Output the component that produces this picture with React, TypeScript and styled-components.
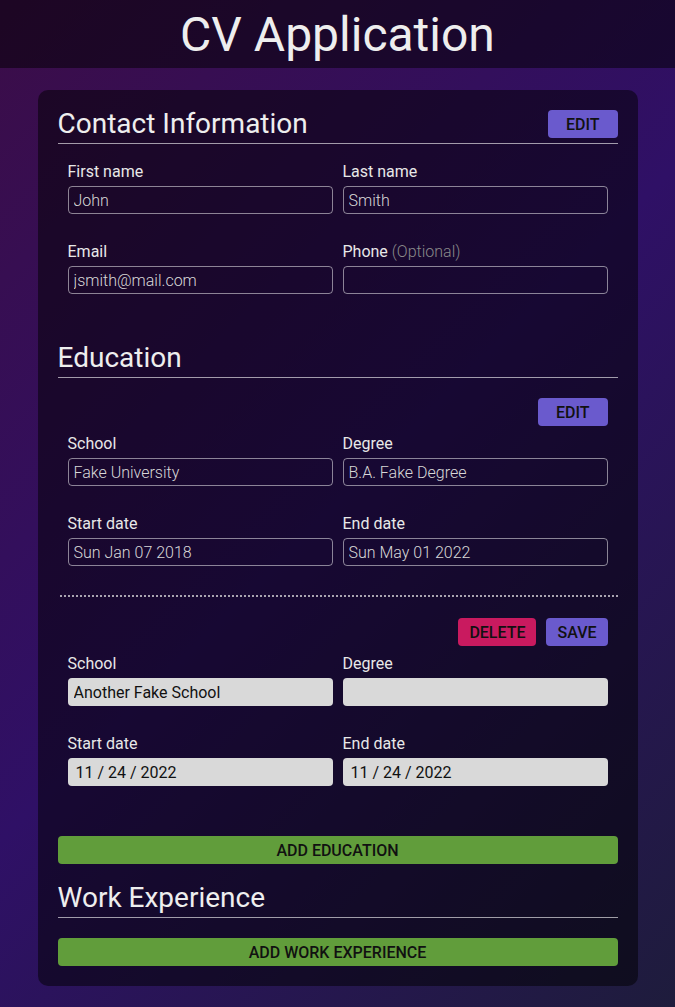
import React from "react";
import styled, { createGlobalStyle, css } from "styled-components";

const GlobalStyle = createGlobalStyle`
  html, body {
    margin: 0;
    padding: 0;
  }
  body {
    font-family: Roboto, "Liberation Sans", Arial, sans-serif;
    color: #eeeeee;
    background: #2a0f55;
  }
  * { box-sizing: border-box; }
`;

const Page = styled.div`
  min-height: 100vh;
  background: linear-gradient(135deg, #3b0d48 0%, #2f1066 50%, #1e1c3c 100%);
  padding-bottom: 21px;
`;

const Header = styled.header`
  background: rgba(0, 0, 0, 0.5);
  padding: 7px 0 5px;
  text-align: center;
`;

const Title = styled.h1`
  margin: 0;
  font-size: 48px;
  line-height: 56px;
  font-weight: 400;
  color: #eeeeee;
`;

const Card = styled.main`
  width: 600px;
  margin: 22px auto 0;
  background: rgba(0, 0, 0, 0.5);
  border-radius: 10px;
  padding: 20px;
  display: flex;
  flex-direction: column;
  gap: 20px;
`;

const Section = styled.section`
  display: flex;
  flex-direction: column;
`;

const SectionHeader = styled.div`
  display: flex;
  justify-content: space-between;
  align-items: flex-start;
  border-bottom: 1px solid rgba(255, 255, 255, 0.6);
`;

const SectionTitle = styled.h2`
  margin: 0;
  padding-bottom: 6px;
  font-size: 28px;
  line-height: 27px;
  font-weight: 400;
  color: #eeeeee;
`;

type Variant = "primary" | "danger" | "success";

const variantColors: Record<Variant, string> = {
  primary: "#6a5acd",
  danger: "#c91a5f",
  success: "#619d3b",
};

const Button = styled.button<{ $variant: Variant; $wide?: boolean; $block?: boolean }>`
  font-family: Roboto, "Liberation Sans", Arial, sans-serif;
  font-size: 16px;
  font-weight: 500;
  text-transform: uppercase;
  color: #111111;
  height: 28px;
  border: none;
  border-radius: 4px;
  background: ${(p) => variantColors[p.$variant]};
  padding: 0 ${(p) => (p.$wide ? "18px" : "11px")};
  cursor: pointer;
  ${(p) =>
    p.$block &&
    css`
      width: 100%;
      padding: 0;
    `}
`;

const Form = styled.form<{ $top: number; $bottom: number }>`
  padding: ${(p) => p.$top}px 10px ${(p) => p.$bottom}px;
  display: flex;
  flex-direction: column;
  gap: 8px;
`;

const ActionRow = styled.div`
  display: flex;
  justify-content: flex-end;
  gap: 10px;
`;

const FieldGrid = styled.div`
  display: grid;
  grid-template-columns: 1fr 1fr;
  gap: 28px 10px;
`;

const Field = styled.label`
  display: flex;
  flex-direction: column;
  gap: 5px;
`;

const LabelText = styled.span`
  font-size: 16px;
  line-height: 19px;
  font-weight: 400;
  color: #e8e8e8;
`;

const Optional = styled.span`
  font-weight: 300;
  color: #8a8a8a;
`;

const Input = styled.input<{ $filled?: boolean; $date?: boolean }>`
  font-family: Roboto, "Liberation Sans", Arial, sans-serif;
  font-size: 16px;
  height: 28px;
  width: 100%;
  border-radius: 4px;
  outline: none;
  ${(p) =>
    p.$filled
      ? css`
          background: #d9d9d9;
          border: none;
          color: #111111;
          font-weight: 400;
          padding: 0 ${p.$date ? "8px" : "6px"};
        `
      : css`
          background: transparent;
          border: 1px solid rgba(255, 255, 255, 0.5);
          color: #d8d8d8;
          font-weight: 300;
          padding: 0 5px;
        `}
`;

const Separator = styled.div`
  height: 2px;
  margin-left: 2px;
  background-image: repeating-linear-gradient(
    90deg,
    #a9a4b0 0 2px,
    transparent 2px 4px
  );
`;

const AddRow = styled.div<{ $top: number }>`
  margin-top: ${(p) => p.$top}px;
  display: flex;
`;

type FieldDef = {
  label: string;
  value: string;
  optional?: boolean;
  date?: boolean;
};

function Fields({ fields, filled }: { fields: FieldDef[]; filled?: boolean }) {
  return (
    <FieldGrid>
      {fields.map((f) => (
        <Field key={f.label}>
          <LabelText>
            {f.label}
            {f.optional && <Optional> (Optional)</Optional>}
          </LabelText>
          <Input
            type="text"
            readOnly={!filled}
            defaultValue={f.value}
            $filled={filled}
            $date={f.date}
          />
        </Field>
      ))}
    </FieldGrid>
  );
}

export default function App() {
  return (
    <>
      <GlobalStyle />
      <Page>
        <Header>
          <Title>CV Application</Title>
        </Header>
        <Card>
          <Section>
            <SectionHeader>
              <SectionTitle>Contact Information</SectionTitle>
              <Button $variant="primary" $wide type="button">
                Edit
              </Button>
            </SectionHeader>
            <Form $top={18} $bottom={30}>
              <Fields
                fields={[
                  { label: "First name", value: "John" },
                  { label: "Last name", value: "Smith" },
                  { label: "Email", value: "jsmith@mail.com" },
                  { label: "Phone", value: "", optional: true },
                ]}
              />
            </Form>
          </Section>

          <Section>
            <SectionHeader>
              <SectionTitle>Education</SectionTitle>
            </SectionHeader>
            <Form $top={20} $bottom={29}>
              <ActionRow>
                <Button $variant="primary" $wide type="button">
                  Edit
                </Button>
              </ActionRow>
              <Fields
                fields={[
                  { label: "School", value: "Fake University" },
                  { label: "Degree", value: "B.A. Fake Degree" },
                  { label: "Start date", value: "Sun Jan 07 2018" },
                  { label: "End date", value: "Sun May 01 2022" },
                ]}
              />
            </Form>
            <Separator />
            <Form $top={21} $bottom={29}>
              <ActionRow>
                <Button $variant="danger" type="button">
                  Delete
                </Button>
                <Button $variant="primary" type="button">
                  Save
                </Button>
              </ActionRow>
              <Fields
                filled
                fields={[
                  { label: "School", value: "Another Fake School" },
                  { label: "Degree", value: "" },
                  { label: "Start date", value: "11 / 24 / 2022", date: true },
                  { label: "End date", value: "11 / 24 / 2022", date: true },
                ]}
              />
            </Form>
            <AddRow $top={21}>
              <Button $variant="success" $block type="button">
                Add Education
              </Button>
            </AddRow>
          </Section>

          <Section>
            <SectionHeader>
              <SectionTitle>Work Experience</SectionTitle>
            </SectionHeader>
            <AddRow $top={20}>
              <Button $variant="success" $block type="button">
                Add Work Experience
              </Button>
            </AddRow>
          </Section>
        </Card>
      </Page>
    </>
  );
}
